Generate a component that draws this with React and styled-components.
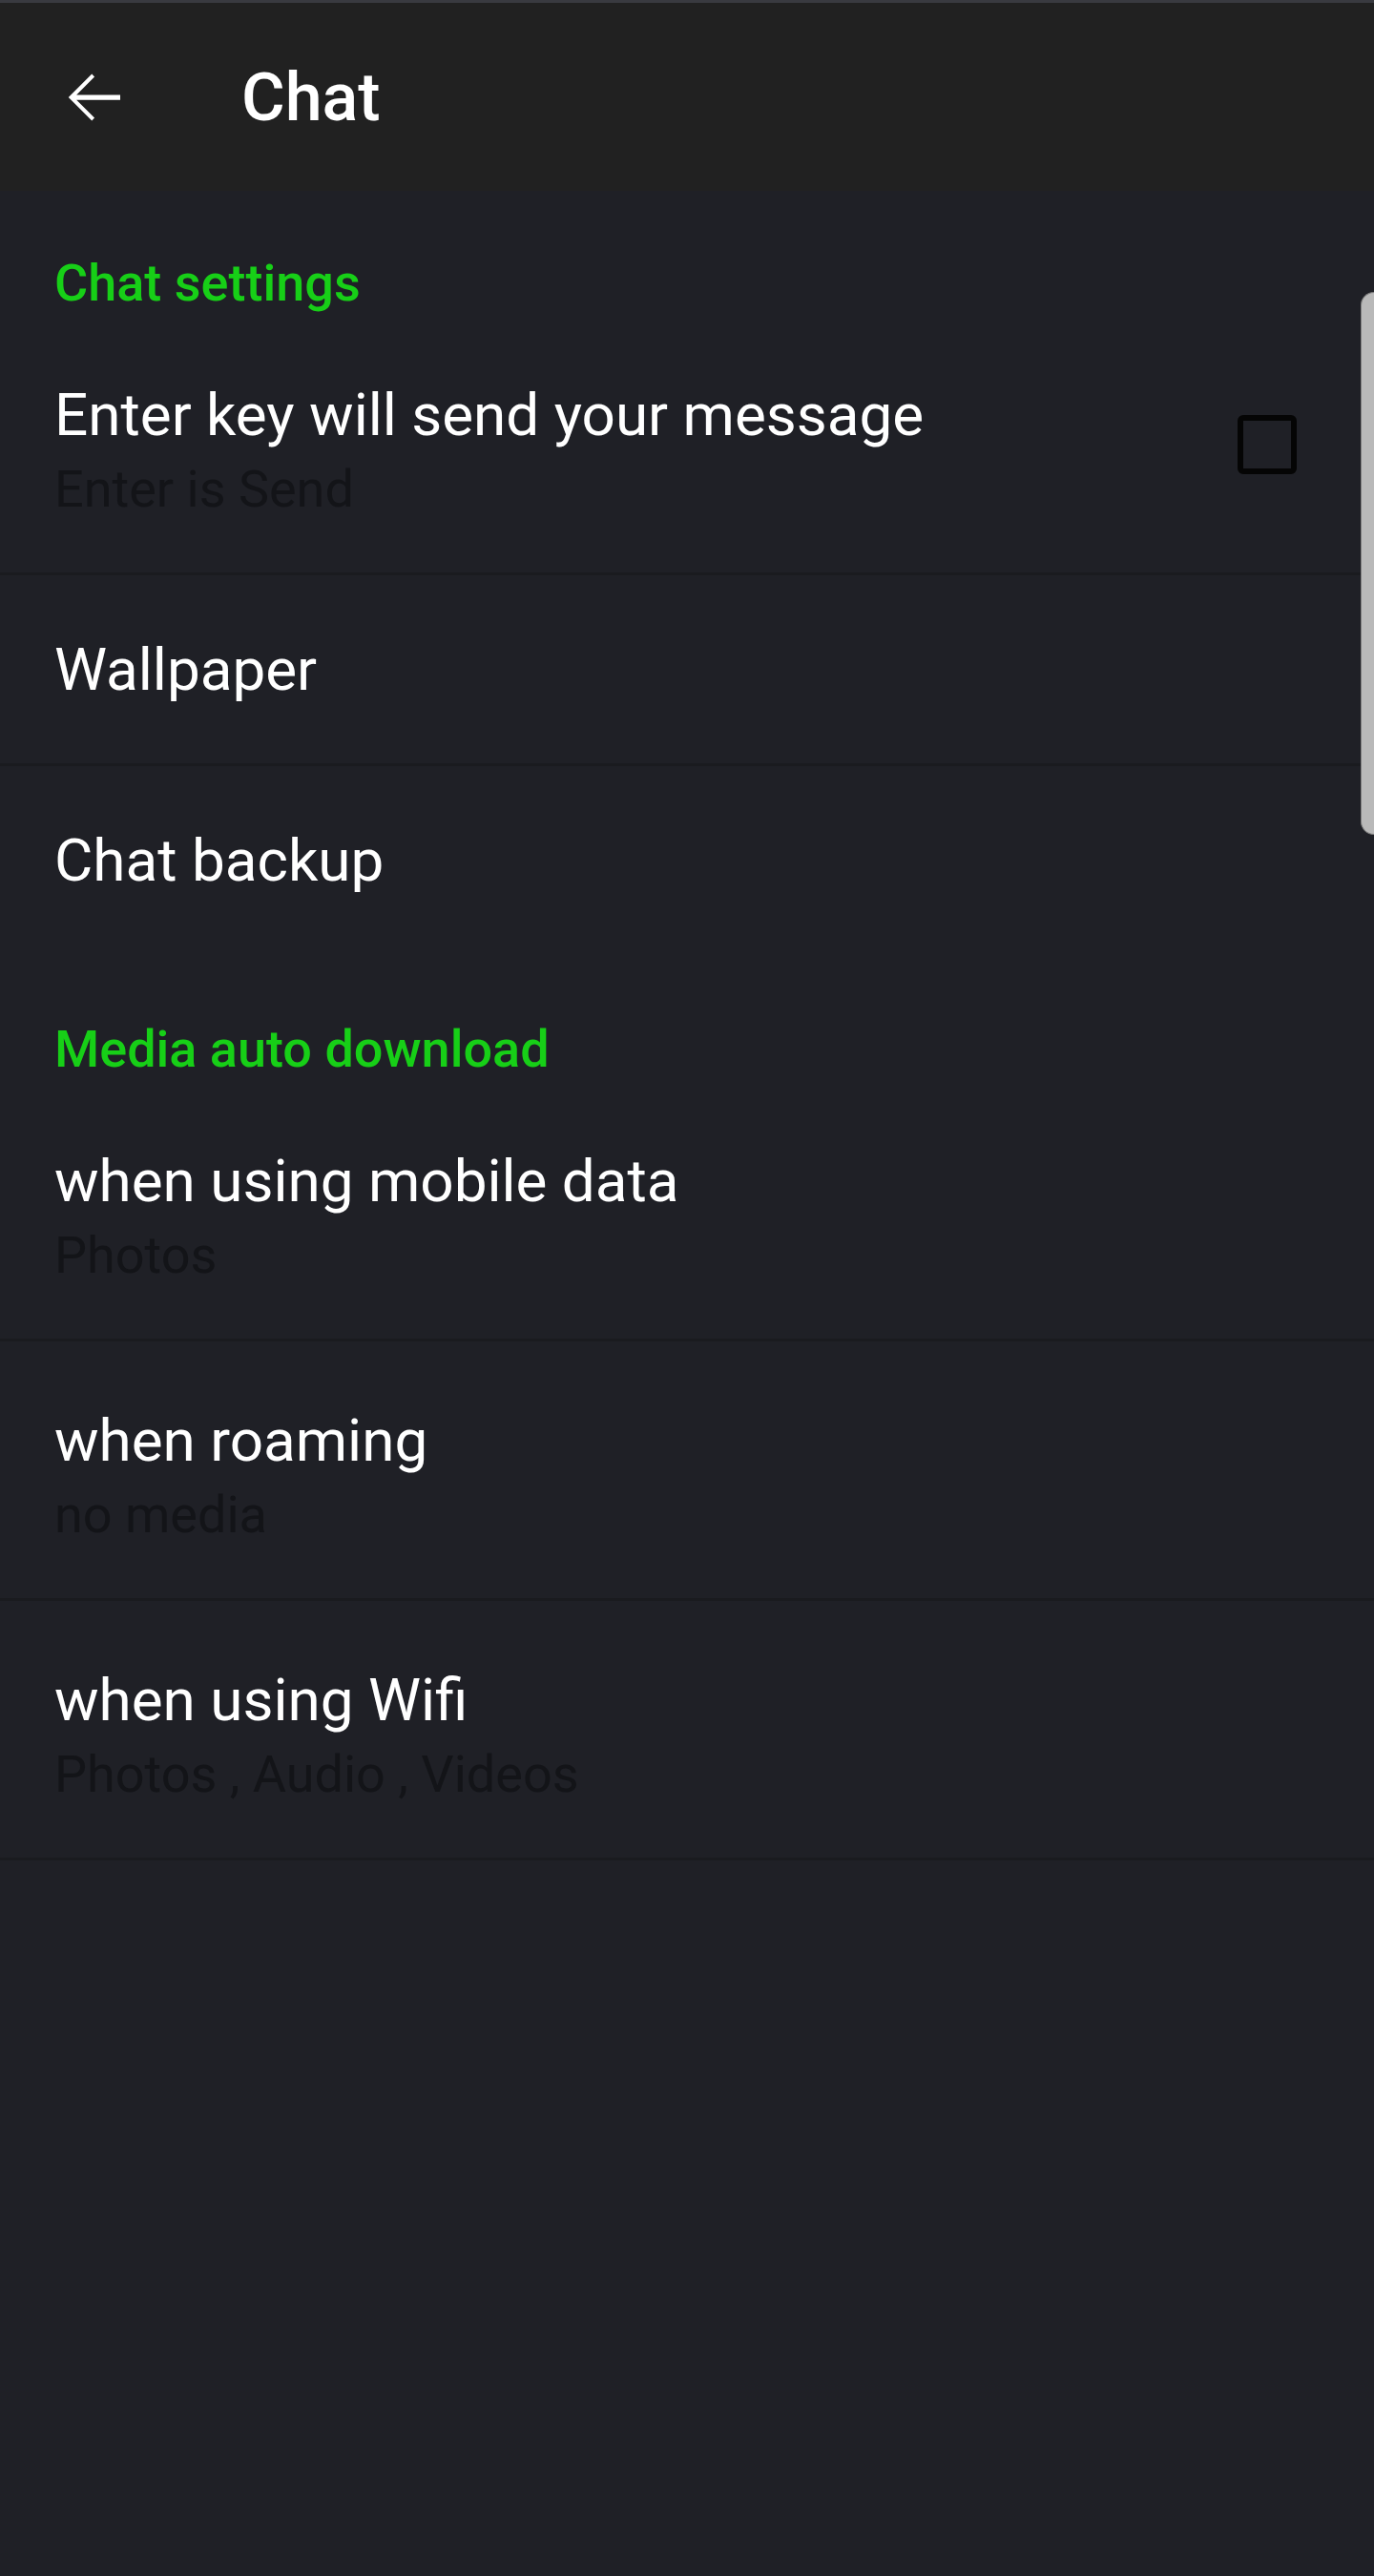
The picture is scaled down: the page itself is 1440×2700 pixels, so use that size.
import React from "react";
import styled, { createGlobalStyle } from "styled-components";

const GlobalStyle = createGlobalStyle`
  html, body {
    margin: 0;
    padding: 0;
    background: #1f2026;
  }
  body {
    font-family: Roboto, "Noto Sans", "Liberation Sans", sans-serif;
  }
`;

const Screen = styled.div`
  position: relative;
  min-height: 2700px;
  background: #1f2026;
  border-top: 3px solid #393a40;
  box-sizing: border-box;
`;

const Toolbar = styled.header`
  display: flex;
  align-items: center;
  height: 197px;
  background: #212121;
  padding-left: 56px;
  box-sizing: border-box;
`;

const BackButton = styled.button`
  display: flex;
  align-items: center;
  justify-content: center;
  width: 84px;
  height: 84px;
  padding: 0;
  border: none;
  background: transparent;
  color: #fff;
  cursor: pointer;
`;

const Title = styled.h1`
  margin: 0 0 0 113px;
  font-size: 70px;
  font-weight: 500;
  color: #fff;
  line-height: 1;
`;

const SectionHeader = styled.div`
  height: 131px;
  padding: 65px 57px 0;
  box-sizing: border-box;
  font-size: 54px;
  line-height: 64px;
  font-weight: 500;
  color: #17cf17;
`;

const Row = styled.div`
  display: flex;
  align-items: ${(p) => (p.$tall ? "flex-start" : "center")};
  height: ${(p) => (p.$tall ? "272px" : "200px")};
  padding: ${(p) => (p.$tall ? "67px 81px 0 57px" : "0 81px 0 57px")};
  box-sizing: border-box;
  border-bottom: 3px solid ${(p) => (p.$last ? "transparent" : "#1a1b1f")};
`;

const RowText = styled.div`
  flex: 1;
  display: flex;
  flex-direction: column;
  gap: 10px;
`;

const RowTitle = styled.div`
  font-size: 62px;
  line-height: 73px;
  color: #fff;
`;

const RowSub = styled.div`
  font-size: 54px;
  line-height: 63px;
  color: #131418;
`;

const Checkbox = styled.span`
  align-self: center;
  margin-top: ${(p) => (p.$offset ? `-${p.$offset}px` : "0")};
  width: 62px;
  height: 62px;
  border: 6px solid #050505;
  border-radius: 6px;
  box-sizing: border-box;
`;

const Scrollbar = styled.div`
  position: absolute;
  right: 0;
  top: 303px;
  width: 14px;
  height: 569px;
  background: #b9b9b9;
  border: 1px solid #7f7f7f;
  border-right: none;
  border-radius: 14px 0 0 14px;
  box-sizing: border-box;
`;

const ArrowBack = () => (
  <svg width="84" height="84" viewBox="0 0 24 24" fill="currentColor">
    <path d="M20 11.25H6.9l5.4-5.4L11.5 5 4.5 12l7 7 .8-.85-5.4-5.4H20v-1.5z" />
  </svg>
);

const sections = [
  {
    title: "Chat settings",
    rows: [
      { title: "Enter key will send your message", sub: "Enter is Send", check: true },
      { title: "Wallpaper" },
      { title: "Chat backup", last: true },
    ],
  },
  {
    title: "Media auto download",
    rows: [
      { title: "when using mobile data", sub: "Photos" },
      { title: "when roaming", sub: "no media" },
      { title: "when using Wifi", sub: "Photos , Audio , Videos" },
    ],
  },
];

export default function App() {
  return (
    <Screen>
      <GlobalStyle />
      <Toolbar>
        <BackButton aria-label="Back">
          <ArrowBack />
        </BackButton>
        <Title>Chat</Title>
      </Toolbar>
      {sections.map((s) => (
        <section key={s.title}>
          <SectionHeader>{s.title}</SectionHeader>
          {s.rows.map((r) => (
            <Row key={r.title} $tall={!!r.sub} $last={r.last}>
              <RowText>
                <RowTitle>{r.title}</RowTitle>
                {r.sub && <RowSub>{r.sub}</RowSub>}
              </RowText>
              {r.check && <Checkbox $offset={67} />}
            </Row>
          ))}
        </section>
      ))}
      <Scrollbar />
    </Screen>
  );
}
